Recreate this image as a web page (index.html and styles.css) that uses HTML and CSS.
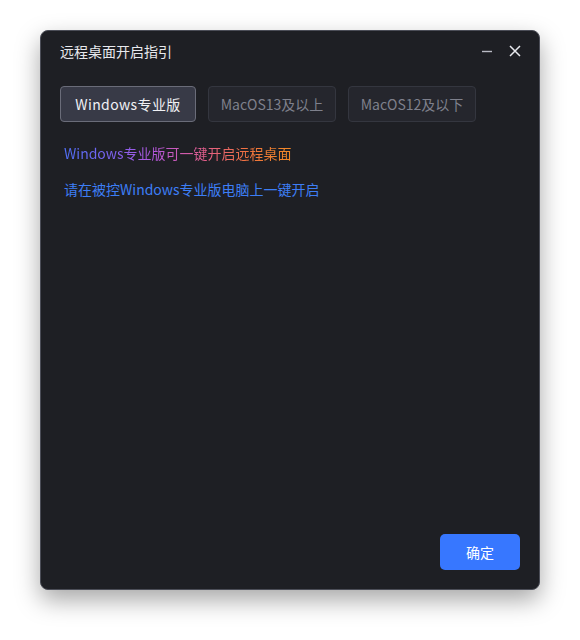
FILE: index.html
```html
<!DOCTYPE html>
<html lang="zh">
<head>
<meta charset="utf-8">
<link rel="stylesheet" href="styles.css">
</head>
<body>
<div class="dialog">
  <div class="header">
    <div class="title">远程桌面开启指引</div>
    <div class="actions">
      <svg class="icon" width="14" height="14" viewBox="0 0 14 14"><path d="M2 7.5H12" stroke="#b8bac4" stroke-width="1.4"/></svg>
      <svg class="icon" width="14" height="14" viewBox="0 0 14 14"><path d="M2 2L12 12M12 2L2 12" stroke="#e8e9ee" stroke-width="1.5"/></svg>
    </div>
  </div>
  <div class="tabs">
    <div class="tab active">Windows专业版</div>
    <div class="tab">MacOS13及以上</div>
    <div class="tab">MacOS12及以下</div>
  </div>
  <div class="content">
    <p class="gradient">Windows专业版可一键开启远程桌面</p>
    <p class="blue">请在被控Windows专业版电脑上一键开启</p>
  </div>
  <div class="footer">
    <button class="ok">确定</button>
  </div>
</div>
</body>
</html>
```
FILE: styles.css
```css
* { box-sizing: border-box; }
html, body { margin: 0; padding: 0; background: #ffffff; }
body {
  font-family: "Noto Sans CJK SC", "Noto Sans", sans-serif;
  width: 580px;
  height: 640px;
  padding: 30px 40px 0 40px;
}
.dialog {
  width: 500px;
  height: 560px;
  background: #1e1f24;
  border: 1px solid #4b4d57;
  border-radius: 8px;
  box-shadow: 0 10px 24px rgba(0,0,0,0.35);
  display: flex;
  flex-direction: column;
  padding: 0 19px 19px 19px;
}
.header {
  height: 44px;
  display: flex;
  align-items: center;
  justify-content: space-between;
  padding-bottom: 4px;
}
.title {
  color: #e8e9ee;
  font-size: 14px;
}
.actions {
  display: flex;
  gap: 14px;
  align-items: center;
  margin-right: -2px;
}
.icon { display: block; }
.tabs {
  display: flex;
  gap: 12px;
  margin-top: 11px;
}
.tab {
  height: 36px;
  padding: 0;
  white-space: nowrap;
  display: flex;
  align-items: center;
  justify-content: center;
  font-size: 14px;
  color: #7e808c;
  background: #25262d;
  border: 1px solid #34363f;
  border-radius: 4px;
  width: 128px;
}
.tab.active {
  width: 136px;
  background: #383a47;
  border-color: #6a6c79;
  color: #f0f1f5;
  letter-spacing: 0.4px;
}
.content {
  flex: 1;
  padding-left: 4px;
  padding-top: 18px;
}
.content p {
  margin: 0 0 14px 0;
  font-size: 14px;
  line-height: 22px;
}
.gradient {
  display: inline-block;
  background: linear-gradient(90deg, #4f6ff7 0%, #7f62f2 22%, #b557dc 40%, #e45e8a 62%, #f0723f 80%, #f28a26 100%);
  -webkit-background-clip: text;
  background-clip: text;
  color: transparent;
}
.blue { color: #3d7ef5; }
.footer {
  display: flex;
  justify-content: flex-end;
}
.ok {
  width: 80px;
  height: 36px;
  border: none;
  border-radius: 5px;
  background: #3777ff;
  color: #ffffff;
  font-family: "Noto Sans CJK SC", "Noto Sans", sans-serif;
  font-size: 14px;
}
```
